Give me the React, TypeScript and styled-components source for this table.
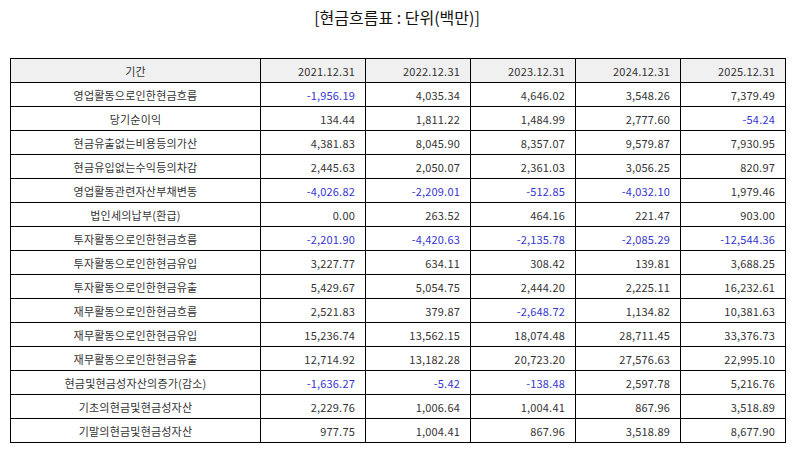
import styled, { createGlobalStyle } from "styled-components";

const GlobalStyle = createGlobalStyle`
  body {
    margin: 0;
    background: #fff;
    font-family: "Noto Sans CJK KR", "Noto Sans", sans-serif;
  }
`;

const years = ["2021.12.31", "2022.12.31", "2023.12.31", "2024.12.31", "2025.12.31"];

const rows: [string, string[]][] = [
  ["영업활동으로인한현금흐름", ["-1,956.19", "4,035.34", "4,646.02", "3,548.26", "7,379.49"]],
  ["당기순이익", ["134.44", "1,811.22", "1,484.99", "2,777.60", "-54.24"]],
  ["현금유출없는비용등의가산", ["4,381.83", "8,045.90", "8,357.07", "9,579.87", "7,930.95"]],
  ["현금유입없는수익등의차감", ["2,445.63", "2,050.07", "2,361.03", "3,056.25", "820.97"]],
  ["영업활동관련자산부채변동", ["-4,026.82", "-2,209.01", "-512.85", "-4,032.10", "1,979.46"]],
  ["법인세의납부(환급)", ["0.00", "263.52", "464.16", "221.47", "903.00"]],
  ["투자활동으로인한현금흐름", ["-2,201.90", "-4,420.63", "-2,135.78", "-2,085.29", "-12,544.36"]],
  ["투자활동으로인한현금유입", ["3,227.77", "634.11", "308.42", "139.81", "3,688.25"]],
  ["투자활동으로인한현금유출", ["5,429.67", "5,054.75", "2,444.20", "2,225.11", "16,232.61"]],
  ["재무활동으로인한현금흐름", ["2,521.83", "379.87", "-2,648.72", "1,134.82", "10,381.63"]],
  ["재무활동으로인한현금유입", ["15,236.74", "13,562.15", "18,074.48", "28,711.45", "33,376.73"]],
  ["재무활동으로인한현금유출", ["12,714.92", "13,182.28", "20,723.20", "27,576.63", "22,995.10"]],
  ["현금및현금성자산의증가(감소)", ["-1,636.27", "-5.42", "-138.48", "2,597.78", "5,216.76"]],
  ["기초의현금및현금성자산", ["2,229.76", "1,006.64", "1,004.41", "867.96", "3,518.89"]],
  ["기말의현금및현금성자산", ["977.75", "1,004.41", "867.96", "3,518.89", "8,677.90"]],
];

const App = () => {
  return (
    <Page>
      <GlobalStyle />
      <Title>[현금흐름표 : 단위(백만)]</Title>
      <Table>
        <colgroup>
          <col style={{ width: 250 }} />
          {years.map((y) => (
            <col key={y} style={{ width: 105 }} />
          ))}
        </colgroup>
        <thead>
          <tr>
            <HeadCell $align="center">기간</HeadCell>
            {years.map((y) => (
              <HeadCell key={y} $align="right">
                {y}
              </HeadCell>
            ))}
          </tr>
        </thead>
        <tbody>
          {rows.map(([label, values]) => (
            <tr key={label}>
              <LabelCell>{label}</LabelCell>
              {values.map((v, i) => (
                <ValueCell key={i} $negative={v.startsWith("-")}>
                  {v}
                </ValueCell>
              ))}
            </tr>
          ))}
        </tbody>
      </Table>
    </Page>
  );
};

export default App;

const Page = styled.div`
  width: 794px;
  height: 452px;
  padding-top: 1px;
  box-sizing: border-box;
`;

const Title = styled.h1`
  margin: 0;
  height: 33px;
  line-height: 33px;
  text-align: center;
  font-size: 16px;
  font-weight: 400;
  color: #111;
`;

const Table = styled.table`
  margin: 24px 0 0 10px;
  width: 775px;
  table-layout: fixed;
  border-collapse: collapse;
  font-size: 11px;
  letter-spacing: 0.2px;
  color: #333;

  td,
  th {
    border: 1px solid #000;
    height: 24px;
    padding: 0 10px;
    box-sizing: border-box;
    white-space: nowrap;
  }
`;

const HeadCell = styled.th<{ $align: string }>`
  background: #f0f0f0;
  font-weight: 400;
  text-align: ${(p) => p.$align};
`;

const LabelCell = styled.td`
  text-align: center;
`;

const ValueCell = styled.td<{ $negative: boolean }>`
  text-align: right;
  color: ${(p) => (p.$negative ? "#3535d0" : "#333")};
`;
